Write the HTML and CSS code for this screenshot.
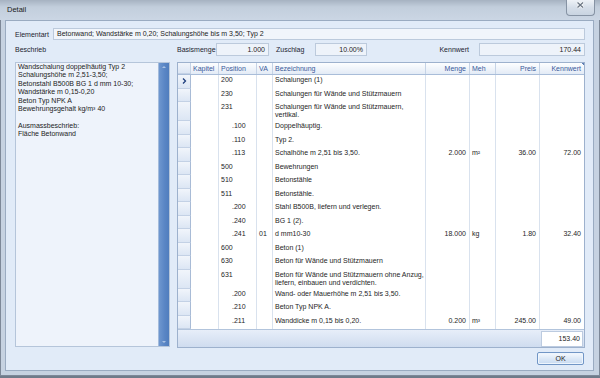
FILE: index.html
```html
<!DOCTYPE html>
<html lang="de">
<head>
    <meta charset="UTF-8">
    <meta name="viewport" content="width=device-width, initial-scale=1.0">
    <title>Detail</title>
    <link rel="stylesheet" href="styles.css">
</head>
<body>
    <div class="window">
        <div class="titlebar">
            <span class="title">Detail</span>
            <button class="close-btn">
                <svg width="29" height="16" viewBox="0 0 29 16">
                    <path d="M11.5 3.5l5.5 5M17 3.5l-5.5 5" stroke="#fff" stroke-width="3" fill="none"/>
                    <path d="M11.5 3.5l5.5 5M17 3.5l-5.5 5" stroke="#6d7886" stroke-width="1.4" fill="none"/>
                </svg>
            </button>
        </div>
        <div class="content">
            <div class="field-row">
                <span class="lbl lbl-elementart">Elementart</span>
                <div class="box box-wide">Betonwand; Wandstärke m 0,20; Schalungshöhe bis m 3,50; Typ 2</div>
            </div>
            <div class="main">
                <div class="left-col">
                    <div class="lbl lbl-beschrieb">Beschrieb</div>
                    <div class="memo">
                        <div class="memo-text">Wandschalung doppelhäutig Typ 2
Schalungshöhe m 2,51-3,50;
Betonstahl B500B BG 1 d mm 10-30;
Wandstärke m 0,15-0,20
Beton Typ NPK A
Bewehrungsgehalt kg/m³ 40

Ausmassbeschrieb:
Fläche Betonwand</div>
                        <div class="scrollbar">
                            <span class="arrow up"></span>
                            <span class="arrow down"></span>
                        </div>
                    </div>
                </div>
                <div class="right-col">
                    <div class="totals">
                        <span class="lbl lbl-basis">Basismenge</span>
                        <div class="box num b-basis">1.000</div>
                        <span class="lbl lbl-zuschlag">Zuschlag</span>
                        <div class="box num b-zuschlag">10.00%</div>
                        <span class="lbl lbl-kennwert">Kennwert</span>
                        <div class="box num b-kennwert">170.44</div>
                    </div>
                    <div class="grid">
                        <div class="gr head">
                            <div class="rh"></div>
                            <div>Kapitel</div>
                            <div>Position</div>
                            <div>VA</div>
                            <div>Bezeichnung</div>
                            <div class="r">Menge</div>
                            <div>Meh</div>
                            <div class="r">Preis</div>
                            <div class="r corner">Kennwert</div>
                        </div>
                        <div class="gr">
                            <div class="rh"><svg width="5" height="6" viewBox="0 0 5 6"><path d="M1 0.5l2.5 2.5-2.5 2.5" stroke="#1f3f7e" stroke-width="1.3" fill="none"/></svg></div>
                            <div></div><div>200</div><div></div><div>Schalungen (1)</div>
                            <div></div><div></div><div></div><div></div>
                        </div>
                        <div class="gr">
                            <div class="rh"></div>
                            <div></div><div>230</div><div></div><div>Schalungen für Wände und Stützmauern</div>
                            <div></div><div></div><div></div><div></div>
                        </div>
                        <div class="gr tall">
                            <div class="rh"></div>
                            <div></div><div>231</div><div></div><div>Schalungen für Wände und Stützmauern,<br>vertikal.</div>
                            <div></div><div></div><div></div><div></div>
                        </div>
                        <div class="gr">
                            <div class="rh"></div>
                            <div></div><div class="sub">.100</div><div></div><div>Doppelhäuptig.</div>
                            <div></div><div></div><div></div><div></div>
                        </div>
                        <div class="gr">
                            <div class="rh"></div>
                            <div></div><div class="sub">.110</div><div></div><div>Typ 2.</div>
                            <div></div><div></div><div></div><div></div>
                        </div>
                        <div class="gr">
                            <div class="rh"></div>
                            <div></div><div class="sub">.113</div><div></div><div>Schalhöhe m 2,51 bis 3,50.</div>
                            <div class="r">2.000</div><div>m²</div><div class="r">36.00</div><div class="r">72.00</div>
                        </div>
                        <div class="gr">
                            <div class="rh"></div>
                            <div></div><div>500</div><div></div><div>Bewehrungen</div>
                            <div></div><div></div><div></div><div></div>
                        </div>
                        <div class="gr">
                            <div class="rh"></div>
                            <div></div><div>510</div><div></div><div>Betonstähle</div>
                            <div></div><div></div><div></div><div></div>
                        </div>
                        <div class="gr">
                            <div class="rh"></div>
                            <div></div><div>511</div><div></div><div>Betonstähle.</div>
                            <div></div><div></div><div></div><div></div>
                        </div>
                        <div class="gr">
                            <div class="rh"></div>
                            <div></div><div class="sub">.200</div><div></div><div>Stahl B500B, liefern und verlegen.</div>
                            <div></div><div></div><div></div><div></div>
                        </div>
                        <div class="gr">
                            <div class="rh"></div>
                            <div></div><div class="sub">.240</div><div></div><div>BG 1 (2).</div>
                            <div></div><div></div><div></div><div></div>
                        </div>
                        <div class="gr">
                            <div class="rh"></div>
                            <div></div><div class="sub">.241</div><div>01</div><div>d mm10-30</div>
                            <div class="r">18.000</div><div>kg</div><div class="r">1.80</div><div class="r">32.40</div>
                        </div>
                        <div class="gr">
                            <div class="rh"></div>
                            <div></div><div>600</div><div></div><div>Beton (1)</div>
                            <div></div><div></div><div></div><div></div>
                        </div>
                        <div class="gr">
                            <div class="rh"></div>
                            <div></div><div>630</div><div></div><div>Beton für Wände und Stützmauern</div>
                            <div></div><div></div><div></div><div></div>
                        </div>
                        <div class="gr tall">
                            <div class="rh"></div>
                            <div></div><div>631</div><div></div><div>Beton für Wände und Stützmauern ohne Anzug,<br>liefern, einbauen und verdichten.</div>
                            <div></div><div></div><div></div><div></div>
                        </div>
                        <div class="gr">
                            <div class="rh"></div>
                            <div></div><div class="sub">.200</div><div></div><div>Wand- oder Mauerhöhe m 2,51 bis 3,50.</div>
                            <div></div><div></div><div></div><div></div>
                        </div>
                        <div class="gr">
                            <div class="rh"></div>
                            <div></div><div class="sub">.210</div><div></div><div>Beton Typ NPK A.</div>
                            <div></div><div></div><div></div><div></div>
                        </div>
                        <div class="gr">
                            <div class="rh"></div>
                            <div></div><div class="sub">.211</div><div></div><div>Wanddicke m 0,15 bis 0,20.</div>
                            <div class="r">0.200</div><div>m³</div><div class="r">245.00</div><div class="r">49.00</div>
                        </div>
                        <div class="grid-footer">
                            <div class="sum">153.40</div>
                        </div>
                    </div>
                </div>
            </div>
            <div class="buttons">
                <button class="ok-btn">OK</button>
            </div>
        </div>
    </div>
</body>
</html>
```

FILE: styles.css
```css
* {
	box-sizing: border-box;
}

body {
	margin: 0;
	background-color: #6f7b8a;
	font-family: "Liberation Sans", Arial, sans-serif;
	font-size: 7px;
	color: #1c1c1c;
}

.window {
	width: 600px;
	height: 376px;
	display: flex;
	flex-direction: column;
	background-color: #c6d2e1;
	box-shadow: inset 1px 0 0 #7d8898, inset -1px 0 0 #7d8898, inset 0 -1px 0 #7d8898;
}

.titlebar {
	height: 20px;
	display: flex;
	align-items: flex-start;
	padding-left: 7px;
	background: linear-gradient(#a6b2c1, #c2cedc 35%, #cbd6e4);
}

.title {
	font-size: 7.5px;
	line-height: 20px;
	color: #1a1a1a;
}

.close-btn {
	margin-left: auto;
	margin-right: 5px;
	width: 29px;
	height: 16px;
	padding: 0;
	border: 1px solid #8693a4;
	border-top: none;
	border-radius: 0 0 4px 4px;
	background: linear-gradient(#eef2f7, #d5dee9 50%, #c9d4e1);
	display: flex;
	align-items: center;
	justify-content: center;
}

.close-btn svg {
	display: block;
	margin: -1px -1px 0;
}

.content {
	height: 351px;
	margin: 0 6px 0 5px;
	padding: 7px 8px 5px 9px;
	border: 1px solid #9aabc1;
	background-color: #e1ebf8;
	display: flex;
	flex-direction: column;
}

.lbl {
	color: #1d2430;
	white-space: nowrap;
}

.box {
	background-color: #eef3fa;
	border: 1px solid #bccadc;
	padding: 0 3px;
	white-space: nowrap;
}

.num {
	text-align: right;
}

.field-row {
	display: flex;
	align-items: center;
	height: 12px;
}

.lbl-elementart {
	width: 38px;
}

.box-wide {
	flex: 1;
	height: 12px;
	line-height: 10px;
	background-color: #f1f5fb;
}

.main {
	display: flex;
	gap: 7px;
	margin-top: 3px;
	height: 305px;
}

.left-col {
	width: 155px;
	display: flex;
	flex-direction: column;
}

.lbl-beschrieb {
	height: 19px;
	line-height: 13px;
}

.memo {
	height: 285px;
	display: flex;
	border: 1px solid #b5c5da;
	background-color: #eef3fb;
}

.memo-text {
	flex: 1;
	padding: 0 2px;
	white-space: pre-line;
	line-height: 8.4px;
	color: #1c1c1c;
}

.scrollbar {
	width: 11px;
	background: linear-gradient(90deg, #6f97cf, #5a86c5 55%, #507dbd);
	border-left: 1px solid #a3bbdc;
	display: flex;
	flex-direction: column;
	justify-content: space-between;
	align-items: center;
	padding: 3px 0;
}

.arrow {
	width: 0;
	height: 0;
	border-left: 2.5px solid transparent;
	border-right: 2.5px solid transparent;
}

.arrow.up {
	border-bottom: 2.5px solid #a9c2e4;
}

.arrow.down {
	border-top: 2.5px solid #a9c2e4;
}

.right-col {
	width: 408px;
	display: flex;
	flex-direction: column;
}

.totals {
	display: flex;
	align-items: center;
	height: 13px;
	margin-bottom: 6px;
}

.totals .box {
	height: 13px;
	line-height: 11px;
}

.lbl-basis {
	width: 39px;
}

.b-basis {
	width: 53px;
}

.lbl-zuschlag {
	width: 39px;
	margin-left: 7px;
}

.b-zuschlag {
	width: 52px;
}

.lbl-kennwert {
	margin-left: auto;
	margin-right: 10px;
}

.b-kennwert {
	width: 106px;
}

.grid {
	height: 286px;
	border: 1px solid #9db1cd;
	background-color: #fff;
	display: flex;
	flex-direction: column;
}

.gr {
	display: grid;
	grid-template-columns: 13px 28px 38px 16px 153px 44px 26px 44px 44px;
	height: 13.5px;
	line-height: 8px;
	color: #1e1e1e;
}

.gr.tall {
	height: 19px;
}

.gr > div {
	padding: 1px 3px 0 2px;
	border-right: 1px solid #d9e2ee;
	white-space: nowrap;
	overflow: hidden;
}

.gr > div:last-child {
	border-right: none;
}

.gr > .r {
	text-align: right;
}

.gr > .sub {
	padding-left: 13px;
}

.gr > .rh {
	padding: 0;
	background: linear-gradient(#f1f5fb, #dce6f4);
	border-right: 1px solid #a8bbd6;
	border-bottom: 1px solid #c3d1e5;
	display: flex;
	align-items: center;
	justify-content: center;
}

.gr.head {
	height: 12px;
	color: #3a5a9a;
	background: linear-gradient(#fdfeff, #e3ebf6);
	border-bottom: 1px solid #a9bdd9;
}

.gr.head > div {
	padding-top: 2px;
	border-right-color: #c5d3e6;
}

.gr.head > .corner {
	background: linear-gradient(225deg, #5d7fb5 1.5px, transparent 1.5px);
}

.grid-footer {
	flex: 1;
	display: flex;
	justify-content: flex-end;
	align-items: center;
	background: linear-gradient(#e7eef9, #cfdcef);
	border-top: 1px solid #b2c4dc;
	padding-right: 1px;
}

.sum {
	width: 42px;
	height: 16px;
	line-height: 14px;
	background-color: #fff;
	border: 1px solid #bccbe0;
	text-align: right;
	padding-right: 2px;
}

.buttons {
	display: flex;
	justify-content: flex-end;
	margin-top: 4px;
}

.ok-btn {
	width: 47px;
	height: 13px;
	margin-right: 1px;
	padding: 0;
	font-family: "Liberation Sans", Arial, sans-serif;
	font-size: 7px;
	color: #1c1c1c;
	border: 1px solid #7196c6;
	border-radius: 2px;
	background: linear-gradient(#f5f9fe, #dde9f7 50%, #c8daf1);
	box-shadow: inset 0 0 0 1px #eef5fd;
}
```
